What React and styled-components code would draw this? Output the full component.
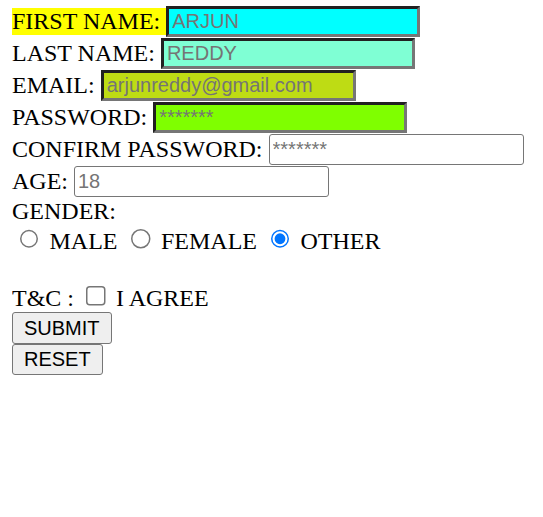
import React from "react";
import styled, { createGlobalStyle } from "styled-components";

const GlobalStyle = createGlobalStyle`
  body {
    margin: 6px 12px;
    font-family: "Liberation Serif", "Times New Roman", serif;
    font-size: 24px;
    color: #000;
    background: #fff;
  }
`;

const Form = styled.form`
  display: flex;
  flex-direction: column;
  align-items: flex-start;
`;

const Row = styled.div`
  display: flex;
  align-items: center;
  height: 31px;
  margin-bottom: 1px;
`;

const Label = styled.label`
  padding-right: 6px;
  line-height: 26.6px;
  background: ${(p) => p.bg || "transparent"};
  white-space: nowrap;
`;

const TextInput = styled.input`
  box-sizing: border-box;
  width: ${(p) => p.w || 254}px;
  height: 31px;
  margin: 0;
  padding: 1.5px 3px;
  font-family: "Liberation Sans", Arial, sans-serif;
  font-size: 20px;
  color: #000;
  outline: none;
  background: ${(p) => p.bg || "#fff"};
  border: ${(p) => (p.bg ? "3px inset #767676" : "1.5px solid #767676")};
  border-radius: ${(p) => (p.bg ? "0" : "3px")};

  &::placeholder {
    color: #757575;
  }
`;

const Line = styled.div`
  line-height: 27.6px;
  white-space: pre;
  margin-top: ${(p) => p.shift || 0}px;
`;

const Spacer = styled.div`
  height: 26.6px;
`;

const Choice = styled.input`
  zoom: 1.5;
  accent-color: #0075ff;
`;

const Button = styled.button`
  box-sizing: border-box;
  height: 31.5px;
  margin: 0;
  padding: 0 11px;
  font-family: "Liberation Sans", Arial, sans-serif;
  font-size: 20px;
  color: #000;
  background: #efefef;
  border: 1.5px solid #767676;
  border-radius: 3px;
`;

const fields = [
  { label: "FIRST NAME:", bg: "#00ffff", labelBg: "#ffff00", placeholder: "ARJUN" },
  { label: "LAST NAME:", bg: "#7fffd4", placeholder: "REDDY" },
  { label: "EMAIL:", bg: "#bedc14", placeholder: "arjunreddy@gmail.com", w: 255 },
  { label: "PASSWORD:", bg: "#7fff00", placeholder: "*******", type: "password" },
  { label: "CONFIRM PASSWORD:", placeholder: "*******", type: "password", w: 255 },
  { label: "AGE:", placeholder: "18", w: 255 },
];

export default function App() {
  return (
    <>
      <GlobalStyle />
      <Form onSubmit={(e) => e.preventDefault()}>
        {fields.map((f) => (
          <Row key={f.label}>
            <Label bg={f.labelBg}>{f.label}</Label>
            <TextInput
              type={f.type || "text"}
              bg={f.bg}
              w={f.w}
              placeholder={f.placeholder}
            />
          </Row>
        ))}
        <Line>GENDER:</Line>
        <Line shift={-1}>
          <Choice type="radio" name="gender" />
          {" MALE "}
          <Choice type="radio" name="gender" />
          {" FEMALE "}
          <Choice type="radio" name="gender" defaultChecked />
          {" OTHER"}
        </Line>
        <Spacer />
        <Line>
          {"T&C : "}
          <Choice type="checkbox" />
          {" I AGREE"}
        </Line>
        <Button type="submit">SUBMIT</Button>
        <Button type="reset">RESET</Button>
      </Form>
    </>
  );
}
